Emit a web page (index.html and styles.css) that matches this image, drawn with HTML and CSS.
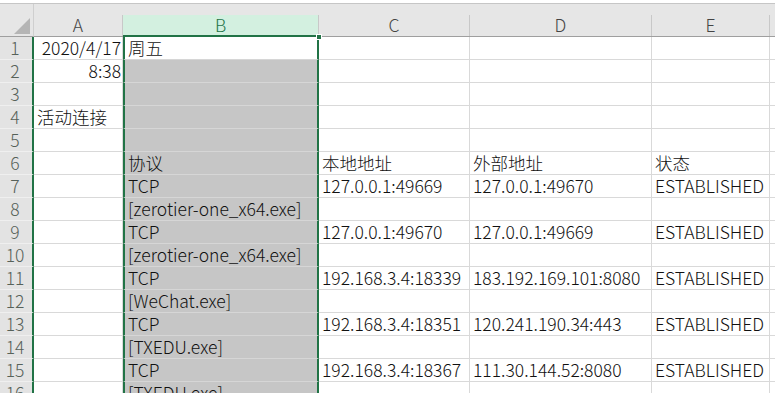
FILE: index.html
```html
<!DOCTYPE html>
<html lang="zh-CN">
<head>
    <meta charset="UTF-8">
    <title>活动连接</title>
    <link rel="stylesheet" href="styles.css">
</head>
<body>
<div class="sheet">
    <div class="topbar"></div>
    <div class="grid">
        <!-- 列标题 -->
        <div class="corner"><svg width="16" height="16" viewBox="0 0 16 16"><polygon points="16,0 16,16 0,16" fill="#b5b5b5"/></svg></div>
        <div class="ch"><span>A</span></div>
        <div class="ch ch-sel"><span>B</span></div>
        <div class="ch"><span>C</span></div>
        <div class="ch"><span>D</span></div>
        <div class="ch"><span>E</span></div>
        <div class="ch ch-rest"><span></span></div>

        <div class="rh">1</div><div class="c num">2020/4/17</div><div class="c sel active">周五<i class="handle"></i></div><div class="c"></div><div class="c"></div><div class="c"></div><div class="c"></div>
        <div class="rh">2</div><div class="c num">8:38</div><div class="c sel"></div><div class="c"></div><div class="c"></div><div class="c"></div><div class="c"></div>
        <div class="rh">3</div><div class="c"></div><div class="c sel"></div><div class="c"></div><div class="c"></div><div class="c"></div><div class="c"></div>
        <div class="rh">4</div><div class="c">活动连接</div><div class="c sel"></div><div class="c"></div><div class="c"></div><div class="c"></div><div class="c"></div>
        <div class="rh">5</div><div class="c"></div><div class="c sel"></div><div class="c"></div><div class="c"></div><div class="c"></div><div class="c"></div>
        <div class="rh">6</div><div class="c"></div><div class="c sel">协议</div><div class="c">本地地址</div><div class="c">外部地址</div><div class="c">状态</div><div class="c"></div>
        <div class="rh">7</div><div class="c"></div><div class="c sel">TCP</div><div class="c">127.0.0.1:49669</div><div class="c">127.0.0.1:49670</div><div class="c">ESTABLISHED</div><div class="c"></div>
        <div class="rh">8</div><div class="c"></div><div class="c sel">[zerotier-one_x64.exe]</div><div class="c"></div><div class="c"></div><div class="c"></div><div class="c"></div>
        <div class="rh">9</div><div class="c"></div><div class="c sel">TCP</div><div class="c">127.0.0.1:49670</div><div class="c">127.0.0.1:49669</div><div class="c">ESTABLISHED</div><div class="c"></div>
        <div class="rh">10</div><div class="c"></div><div class="c sel">[zerotier-one_x64.exe]</div><div class="c"></div><div class="c"></div><div class="c"></div><div class="c"></div>
        <div class="rh">11</div><div class="c"></div><div class="c sel">TCP</div><div class="c">192.168.3.4:18339</div><div class="c">183.192.169.101:8080</div><div class="c">ESTABLISHED</div><div class="c"></div>
        <div class="rh">12</div><div class="c"></div><div class="c sel">[WeChat.exe]</div><div class="c"></div><div class="c"></div><div class="c"></div><div class="c"></div>
        <div class="rh">13</div><div class="c"></div><div class="c sel">TCP</div><div class="c">192.168.3.4:18351</div><div class="c">120.241.190.34:443</div><div class="c">ESTABLISHED</div><div class="c"></div>
        <div class="rh">14</div><div class="c"></div><div class="c sel">[TXEDU.exe]</div><div class="c"></div><div class="c"></div><div class="c"></div><div class="c"></div>
        <div class="rh">15</div><div class="c"></div><div class="c sel">TCP</div><div class="c">192.168.3.4:18367</div><div class="c">111.30.144.52:8080</div><div class="c">ESTABLISHED</div><div class="c"></div>
        <div class="rh">16</div><div class="c"></div><div class="c sel">[TXEDU.exe]</div><div class="c"></div><div class="c"></div><div class="c"></div><div class="c"></div>
    </div>
</div>
</body>
</html>
```

FILE: styles.css
```css
* {
    box-sizing: border-box;
}
body {
    margin: 0;
    font-family: "Noto Sans CJK SC", "Noto Sans", sans-serif;
    background: #fff;
    height: 393px;
    overflow: hidden;
}
.sheet {
    width: 775px;
}
.topbar {
    height: 4px;
    background: #fff;
    border-bottom: 1px solid #c6c6c6;
}
.grid {
    display: grid;
    grid-template-columns: 34px 89px 196px 151px 182px 118px 1fr;
    grid-template-rows: 33px;
    grid-auto-rows: 23px;
}

/* 列标题 */
.corner,
.ch {
    background: #e6e6e6;
    border-bottom: 1px solid #9f9f9f;
    display: flex;
    align-items: flex-end;
}
.corner {
    justify-content: flex-end;
    padding: 0 3px 2px 0;
    border-right: 1px solid #cfcfcf;
}
.ch span {
    display: block;
    width: 100%;
    height: 21px;
    border-right: 1px solid #c8c8c8;
    text-align: center;
    font-size: 17.5px;
    font-weight: 300;
    line-height: 20px;
    color: #444;
}
.ch-sel {
    border-bottom: 2px solid #217346;
}
.ch-sel span {
    height: 20px;
    background: #d3f0e0;
    color: #217346;
}
.ch-rest span {
    border-right: none;
}

/* 行号 */
.rh {
    background: #e3e3e3;
    border-right: 2px solid #217346;
    border-bottom: 1px solid #efefef;
    text-align: center;
    font-size: 17.5px;
    font-weight: 300;
    line-height: 22px;
    color: #566159;
    padding-right: 2px;
}

/* 单元格 */
.c {
    border-right: 1px solid #d9d9d9;
    border-bottom: 1px solid #d9d9d9;
    padding: 0 3px;
    font-size: 17.5px;
    font-weight: 300;
    line-height: 22px;
    color: #111;
    white-space: nowrap;
}
.num {
    text-align: right;
    padding-right: 1px;
}
.sel {
    background: #c6c6c6;
    border-left: 2px solid #217346;
    border-right: 2px solid #217346;
    border-bottom-color: #d6d6d6;
    padding-left: 3px;
}
.active {
    background: #fff;
    position: relative;
}
.handle {
    position: absolute;
    top: -3px;
    right: -5px;
    width: 6px;
    height: 6px;
    background: #217346;
    border: 1px solid #fff;
}
```
